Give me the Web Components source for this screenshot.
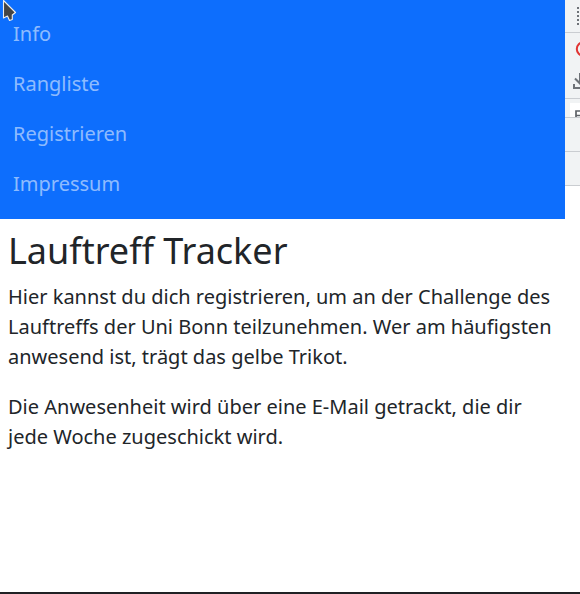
<!DOCTYPE html>
<html lang="de">
<head>
<meta charset="utf-8">
<title>Lauftreff Tracker</title>
<style>
html, body { margin: 0; height: 100%; overflow: hidden; background: #fff; }
body { font: 20px/30px "Noto Sans", sans-serif; color: #212529; }
</style>
</head>
<body>
<app-window>
  <tracker-nav slot="page">
    <nav-item>Info</nav-item>
    <nav-item>Rangliste</nav-item>
    <nav-item>Registrieren</nav-item>
    <nav-item>Impressum</nav-item>
  </tracker-nav>
  <page-content slot="page">
    <span slot="title">Lauftreff Tracker</span>
    <p>Hier kannst du dich registrieren, um an der Challenge des Lauftreffs der Uni Bonn teilzunehmen. Wer am häufigsten anwesend ist, trägt das gelbe Trikot.</p>
    <p>Die Anwesenheit wird über eine E-Mail getrackt, die dir jede Woche zugeschickt wird.</p>
  </page-content>
  <tools-panel slot="side"></tools-panel>
  <mouse-pointer slot="overlay"></mouse-pointer>
</app-window>
<script>
function define(name, html) {
  customElements.define(name, class extends HTMLElement {
    constructor() {
      super();
      this.attachShadow({ mode: "open" }).innerHTML = html;
    }
  });
}

define("app-window", `
<style>
:host { display: grid; grid-template-columns: 565px 15px; box-sizing: border-box; height: 594px; border-bottom: 2px solid #202124; position: relative; }
main { min-width: 0; }
</style>
<main><slot name="page"></slot></main>
<slot name="side"></slot>
<slot name="overlay"></slot>`);

define("tracker-nav", `
<style>
:host { display: block; box-sizing: border-box; height: 219px; padding: 9px 13px 0; background: #0d6efd; }
nav { display: flex; flex-direction: column; }
</style>
<nav><slot></slot></nav>`);

define("nav-item", `
<style>
:host { display: block; padding: 10px 0; color: rgba(255,255,255,.55); }
</style>
<slot></slot>`);

define("page-content", `
<style>
:host { display: block; padding: 10px 8px 0; }
h1 { margin: 0 0 10px; font-size: 36px; line-height: 43px; font-weight: 400; }
::slotted(p) { margin: 0 0 20px !important; }
</style>
<h1><slot name="title"></slot></h1>
<slot></slot>`);

define("tools-panel", `
<style>
:host { display: flex; flex-direction: column; overflow: hidden; }
div { box-sizing: border-box; flex: none; background: #f1f3f4; border-bottom: 1px solid #cacdd1; overflow: hidden; }
svg { display: block; }
.a { height: 33px; } .b { height: 66px; } .c { height: 19px; padding: 4px 0 0 5px; } .d, .e { height: 34px; }
</style>
<div class="a"><svg width="15" height="32"><path d="M13 7v18" stroke="#6e7277" stroke-width="2" stroke-dasharray="2 2" fill="none"/></svg></div>
<div class="b"><svg width="15" height="65" fill="none">
<circle cx="18.500" cy="16" r="6.700" stroke="#e13432" stroke-width="2"/>
<path d="M15 40v9M10 45.500l5 5 5-5M9 51v4h13" stroke="#6e7277" stroke-width="2"/></svg></div>
<div class="c"><svg width="10" height="14"><path d="M0 0h10v14H0z" fill="#fff"/><path d="M6 14V8H10M6 12.500H10" stroke="#5f6368" stroke-width="1.700" fill="none"/></svg></div>
<div class="d"></div><div class="e"></div>`);

define("mouse-pointer", `
<style>
:host { position: absolute; left: 0; top: 0; }
svg { display: block; }
</style>
<svg width="20" height="24"><path d="M3.500 .5L15.500 12.500 12.300 15 12.300 19.500 9.500 20.500 7.500 16 3.500 18z" fill="#444" stroke="#eee" stroke-width="1.100" stroke-linejoin="round"/></svg>`);
</script>
</body>
</html>
